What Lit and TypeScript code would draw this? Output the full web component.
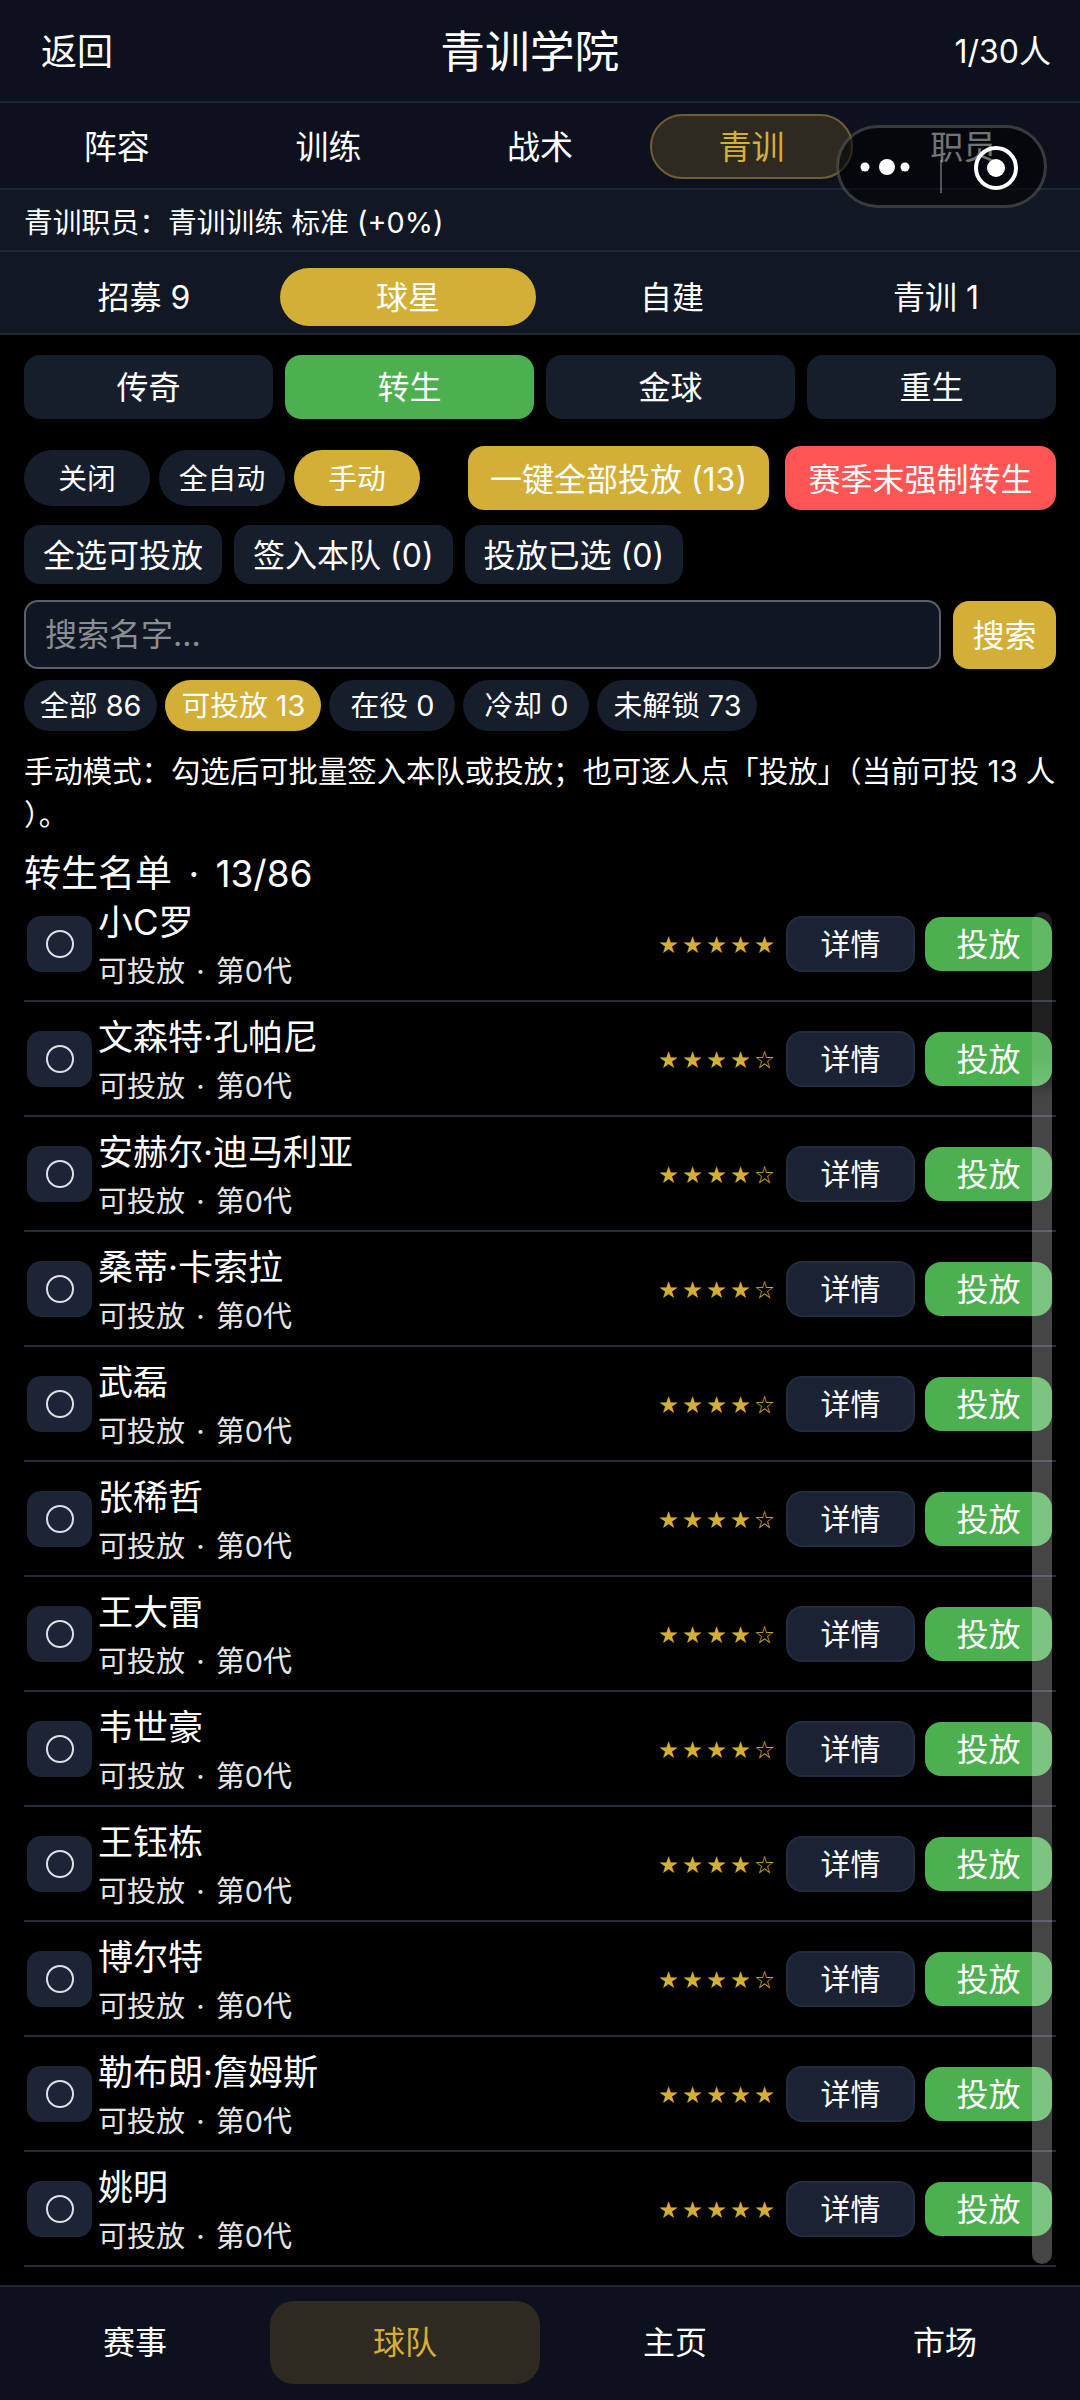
import { LitElement, html, css } from "lit";
import { customElement } from "lit/decorators.js";

const players: [string, number][] = [
  ["小C罗", 5], ["文森特·孔帕尼", 4], ["安赫尔·迪马利亚", 4], ["桑蒂·卡索拉", 4],
  ["武磊", 4], ["张稀哲", 4], ["王大雷", 4], ["韦世豪", 4],
  ["王钰栋", 4], ["博尔特", 4], ["勒布朗·詹姆斯", 5], ["姚明", 5],
];

const STAFF = "青训职员\uFF1A青训训练 标准 (+0%)";
const HINT = "手动模式\uFF1A勾选后可批量签入本队或投放\uFF1B也可逐人点「投放」\uFF08当前可投 13 人\uFF09\u3002";

@customElement("app-root")
export class AppRoot extends LitElement {
  static styles = css`
    :host { display: block; width: 1080px; height: 2400px; position: relative; overflow: hidden; background: #000; color: #fff;
      font-family: "Inter", "Noto Sans CJK SC", sans-serif; }
    * { box-sizing: border-box; }
    .page { height: 2400px; display: flex; flex-direction: column; }
    .header { height: 103px; flex: none; background: #0c111d; border-bottom: 2px solid #1f2636; display: flex; justify-content: space-between; align-items: center; padding: 0 29px 4px 41px; }
    .back { font-size: 36px; }
    .title { font-size: 44.8px; margin-right: 8px; }
    .count { font-size: 32px; }
    .tabs { height: 87px; flex: none; background: #0c111d; border-bottom: 2px solid #1f2636; display: grid; grid-template-columns: repeat(5, 1fr); gap: 8px; padding: 11px 15px 9px; }
    .tab { height: 65px; display: flex; align-items: center; justify-content: center; font-size: 33px; border: 2px solid transparent; border-radius: 33px; padding-bottom: 4px; }
    .tab.on { background: #2e2a22; border-color: #6f5f30; color: #d4af37; }
    .staff { height: 62px; flex: none; background: #111723; border-bottom: 2px solid #1f2636; display: flex; align-items: center; padding: 0 24px; font-size: 28.8px; }
    .sub { height: 83px; flex: none; background: #111723; border-bottom: 2px solid #1f2636; display: grid; grid-template-columns: repeat(4, 1fr); gap: 8px; padding: 16px 16px 7px; }
    .subtab { height: 58px; display: flex; align-items: center; justify-content: center; font-size: 32px; border-radius: 29px; padding-bottom: 4px; }
    .subtab.on { background: #d4af37; }
    .main { flex: 1; min-height: 0; padding: 20px 24px 0; display: flex; flex-direction: column; }
    .modes { display: grid; grid-template-columns: repeat(4, 1fr); gap: 12px; }
    .mode { height: 64px; border-radius: 16px; background: #161d2b; display: flex; align-items: center; justify-content: center; font-size: 32px; padding-bottom: 4px; }
    .mode.on { background: #4caf50; }
    .actions { display: flex; justify-content: space-between; align-items: center; margin-top: 27px; }
    .group { display: flex; align-items: center; }
    .g9 { gap: 9px; }
    .g16 { gap: 16px; }
    .pill { width: 126px; height: 56px; border-radius: 28px; background: #161d2b; display: flex; align-items: center; justify-content: center; font-size: 28.8px; padding-bottom: 3px; }
    .pill.on { background: #d4af37; }
    .big { height: 64px; border-radius: 16px; display: flex; align-items: center; justify-content: center; font-size: 32px; padding-bottom: 3px; }
    .gold { background: #d4af37; width: 301px; }
    .red { background: #ff5555; width: 271px; }
    .batch { display: flex; gap: 12px; margin-top: 15px; }
    .bt { height: 59px; padding: 0 19px 3px; border-radius: 16px; background: #161d2b; display: flex; align-items: center; font-size: 32px; }
    .search { display: flex; gap: 12px; margin-top: 16px; }
    .input { flex: 1; height: 69px; border: 2px solid #5a5f6b; border-radius: 14px; background: #111722; display: flex; align-items: center; padding: 0 0 5px 19px; font-size: 32px; color: #8a8d94; }
    .sbtn { width: 103px; height: 68px; margin-top: 1px; border-radius: 16px; background: #d4af37; display: flex; align-items: center; justify-content: center; font-size: 32px; padding-bottom: 5px; }
    .chips { display: flex; gap: 8px; margin-top: 11px; }
    .chip { height: 51px; min-width: 126px; padding: 0 16px 5px; border-radius: 26px; background: #161d2b; display: flex; align-items: center; justify-content: center; font-size: 28.8px; white-space: nowrap; }
    .chip.on { background: #d4af37; }
    .hint { margin-top: 19px; font-size: 29.4px; line-height: 43px; line-break: anywhere; }
    .h2 { margin-top: 21px; height: 30px; line-height: 34px; font-size: 37px; word-spacing: 6px; }
    .row { height: 115px; border-bottom: 2px solid #262a3a; display: flex; align-items: center; padding: 0 4px 0 3px; }
    .cb { width: 65px; height: 56px; flex: none; border-radius: 14px; background: #1c2436; display: flex; align-items: center; justify-content: center; margin-right: 6px; }
    .dot { width: 28px; height: 28px; border: 2px solid #dfe1e6; border-radius: 50%; }
    .info { flex: 1; min-width: 0; padding-top: 5px; }
    .name { font-size: 35px; line-height: 44px; }
    .meta { font-size: 29px; line-height: 40px; margin-top: 8px; color: #e4e4e4; word-spacing: 3px; }
    .stars { font-family: "Noto Sans CJK SC", sans-serif; font-size: 19px; letter-spacing: 5px; color: #d4af37; margin-right: 7px; white-space: nowrap; }
    .detail { width: 129px; height: 56px; border-radius: 16px; background: #1a2233; border: 2px solid #232c3e; display: flex; align-items: center; justify-content: center; font-size: 30px; margin-right: 10px; flex: none; padding-bottom: 3px; }
    .drop { width: 127px; height: 54px; border-radius: 16px; background: #4caf50; display: flex; align-items: center; justify-content: center; font-size: 32px; flex: none; padding-bottom: 3px; }
    .nav { height: 115px; flex: none; background: #0c111d; border-top: 2px solid #1f2636; display: grid; grid-template-columns: repeat(4, 1fr); padding-top: 14px; }
    .navitem { height: 83px; display: flex; align-items: center; justify-content: center; font-size: 32px; border-radius: 24px; padding-bottom: 5px; }
    .navitem.on { background: #2e2a22; color: #d4af37; }
    .capsule { position: absolute; left: 836px; top: 125px; width: 211px; height: 83px; border: 3px solid rgba(255,255,255,.2); border-radius: 42px; background: rgba(0,0,0,.55); }
    .capsule svg { display: block; position: absolute; left: -3px; top: -3px; }
    .scroll { position: absolute; left: 1032px; top: 912px; width: 20px; height: 1352px; border-radius: 10px; background: linear-gradient(to bottom, rgba(255,255,255,.12) 0, rgba(255,255,255,.12) 145px, rgba(255,255,255,.27) 185px, rgba(255,255,255,.27) 100%); }
  `;

  render() {
    return html`
      <div class="page">
        <div class="header"><div class="back">返回</div><div class="title">青训学院</div><div class="count">1/30人</div></div>
        <div class="tabs">
          ${["阵容", "训练", "战术", "青训", "职员"].map((t, i) => html`<div class="tab ${i === 3 ? "on" : ""}">${t}</div>`)}
        </div>
        <div class="staff">${STAFF}</div>
        <div class="sub">
          ${["招募 9", "球星", "自建", "青训 1"].map((t, i) => html`<div class="subtab ${i === 1 ? "on" : ""}">${t}</div>`)}
        </div>
        <div class="main">
          <div class="modes">
            ${["传奇", "转生", "金球", "重生"].map((t, i) => html`<div class="mode ${i === 1 ? "on" : ""}">${t}</div>`)}
          </div>
          <div class="actions">
            <div class="group g9">
              ${["关闭", "全自动", "手动"].map((t, i) => html`<div class="pill ${i === 2 ? "on" : ""}">${t}</div>`)}
            </div>
            <div class="group g16">
              <div class="big gold">一键全部投放 (13)</div>
              <div class="big red">赛季末强制转生</div>
            </div>
          </div>
          <div class="batch">
            <div class="bt">全选可投放</div><div class="bt">签入本队 (0)</div><div class="bt">投放已选 (0)</div>
          </div>
          <div class="search">
            <div class="input">搜索名字...</div>
            <div class="sbtn">搜索</div>
          </div>
          <div class="chips">
            ${["全部 86", "可投放 13", "在役 0", "冷却 0", "未解锁 73"].map((t, i) => html`<div class="chip ${i === 1 ? "on" : ""}">${t}</div>`)}
          </div>
          <div class="hint">${HINT}</div>
          <div class="h2">转生名单 · 13/86</div>
          ${players.map(([n, s]) => html`
            <div class="row">
              <div class="cb"><div class="dot"></div></div>
              <div class="info"><div class="name">${n}</div><div class="meta">可投放 · 第0代</div></div>
              <div class="stars">${"★".repeat(s)}${"☆".repeat(5 - s)}</div>
              <div class="detail">详情</div>
              <div class="drop">投放</div>
            </div>`)}
        </div>
        <div class="nav">
          ${["赛事", "球队", "主页", "市场"].map((t, i) => html`<div class="navitem ${i === 1 ? "on" : ""}">${t}</div>`)}
        </div>
      </div>
      <div class="scroll"></div>
      <div class="capsule">
        <svg width="211" height="83" viewBox="0 0 211 83">
          <circle cx="29" cy="42" r="4.5" fill="#fff"/><circle cx="51" cy="42" r="8" fill="#fff"/><circle cx="69" cy="42" r="4.5" fill="#fff"/>
          <rect x="104" y="35" width="2" height="33" fill="rgba(255,255,255,.3)"/>
          <circle cx="160" cy="43" r="20" fill="none" stroke="#fff" stroke-width="4"/><circle cx="160" cy="43" r="9" fill="#fff"/>
        </svg>
      </div>
    `;
  }
}
